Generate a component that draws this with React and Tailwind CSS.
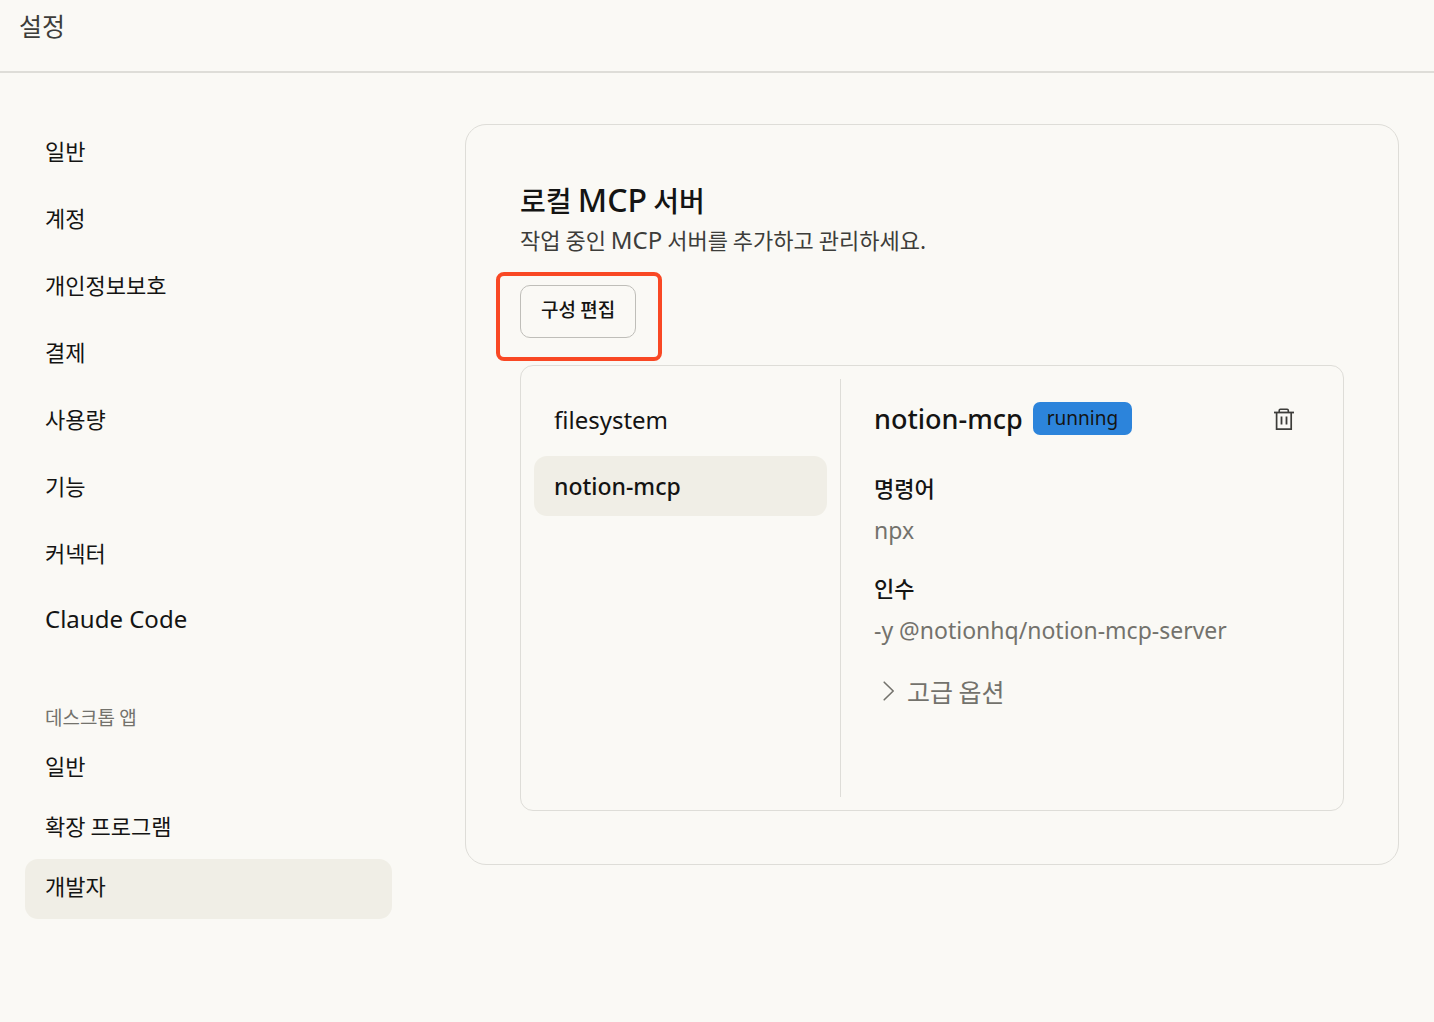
import { useState } from "react";

const mainMenu = ["일반", "계정", "개인정보보호", "결제", "사용량", "기능", "커넥터", "Claude Code"];
const desktopMenu = ["일반", "확장 프로그램", "개발자"];

const servers = [
  { name: "filesystem", command: "npx", args: "-y @modelcontextprotocol/server-filesystem" },
  { name: "notion-mcp", command: "npx", args: "-y @notionhq/notion-mcp-server" },
];

const latin = "font-['Noto_Sans','Noto_Sans_CJK_KR',sans-serif]";

const TrashIcon = () => (
  <svg width="22" height="24" viewBox="0 0 22 24" fill="none" stroke="#3d3d3a" aria-hidden="true">
    <path d="M1 5.5h20" strokeWidth="1.8" />
    <path d="M6.2 5V3.4c0-.8.5-1.2 1.2-1.2h6.7c.7 0 1.2.4 1.2 1.2V5" strokeWidth="1.6" />
    <path d="M3.6 6v16.1h14.6V6" strokeWidth="1.7" />
    <path d="M8.5 9.5v8M13.5 9.5v8" strokeWidth="1.8" />
  </svg>
);

const ChevronIcon = () => (
  <svg width="12" height="20" viewBox="0 0 12 20" fill="none" stroke="#73726c" aria-hidden="true">
    <path d="M1.2 1.2 10.2 10l-9 8.8" strokeWidth="1.6" strokeLinecap="round" strokeLinejoin="round" />
  </svg>
);

const NavItem = ({ label, active, onClick }) => {
  const isLatin = /^[\x20-\x7e]+$/.test(label);

  return (
    <li>
      <button
        type="button"
        onClick={onClick}
        className={`flex h-[60px] w-full items-center rounded-[13px] px-5 pb-2 text-left cursor-pointer ${
          active ? "bg-[#f0eee6]" : ""
        } ${isLatin ? `${latin} text-[24px]` : "text-[22px]"}`}
      >
        {label}
      </button>
    </li>
  );
};

const Sidebar = () => {
  const [active, setActive] = useState("desktop-개발자");

  return (
    <nav className="w-[367px] shrink-0">
      <ul className="flex flex-col gap-[7px]">
        {mainMenu.map((label) => (
          <NavItem
            key={label}
            label={label}
            active={active === `main-${label}`}
            onClick={() => setActive(`main-${label}`)}
          />
        ))}
      </ul>

      <h2 className="mt-12 px-5 pb-[6px] text-[19px] leading-8 text-[#73726c]">데스크톱 앱</h2>
      <ul className="flex flex-col">
        {desktopMenu.map((label) => (
          <NavItem
            key={label}
            label={label}
            active={active === `desktop-${label}`}
            onClick={() => setActive(`desktop-${label}`)}
          />
        ))}
      </ul>
    </nav>
  );
};

const ServerDetail = ({ server }) => (
  <section className="min-w-0 flex-1 pl-[33px] pr-[33px] pt-[13px]">
    <div className="flex items-center">
      <h3 className={`${latin} text-[27px] leading-[53px] font-medium`}>{server.name}</h3>
      <span className={`${latin} ml-[10px] rounded-[7px] bg-[#2c84db] px-[14px] text-[19px] leading-[33px]`}>
        running
      </span>
      <button
        type="button"
        aria-label="삭제"
        className="ml-auto flex size-[53px] items-center justify-center cursor-pointer"
      >
        <TrashIcon />
      </button>
    </div>

    <dl className="mt-[22px]">
      <dt className="text-[22px] leading-10 font-medium">명령어</dt>
      <dd className={`${latin} text-[23px] leading-[46px] text-[#73726c]`}>{server.command}</dd>
      <dt className="mt-[14px] text-[22px] leading-10 font-medium">인수</dt>
      <dd className={`${latin} text-[23px] leading-[46px] text-[#73726c]`}>{server.args}</dd>
    </dl>

    <button
      type="button"
      className="mt-[18px] flex items-center gap-3 pl-[9px] text-[25px] leading-10 text-[#73726c] cursor-pointer"
    >
      <ChevronIcon />
      고급 옵션
    </button>
  </section>
);

const App = () => {
  const [selected, setSelected] = useState("notion-mcp");
  const server = servers.find((s) => s.name === selected);

  return (
    <div className="min-h-screen bg-[#faf9f5] font-['Noto_Sans_CJK_KR','Noto_Sans',sans-serif] text-[#141413]">
      <header className="h-[73px] border-b-2 border-[#deddd8] px-[19px] pt-[5px]">
        <h1 className="text-[25px] leading-10 text-[#3d3d3a]">설정</h1>
      </header>

      <div className="flex items-start gap-[73px] pt-[51px] pl-[25px] pr-[35px]">
        <Sidebar />

        <main className="min-w-0 flex-1 rounded-[21px] border border-[#deddd8] px-[54px] py-[53px]">
          <h2 className="text-[28px] leading-[44px] font-medium">
            로컬 <span className={`${latin} text-[32px]`}>MCP</span> 서버
          </h2>
          <p className="text-[22px] leading-[34px] text-[#3d3d3a]">
            작업 중인 <span className={`${latin} text-[24px]`}>MCP</span> 서버를 추가하고 관리하세요.
          </p>

          <div className="relative mt-7 w-fit">
            <button
              type="button"
              className="h-[53px] rounded-[10px] border border-[#bfbeb9] px-5 pb-1 text-[19px] font-medium cursor-pointer"
            >
              구성 편집
            </button>
            {/* marco que resalta el botón */}
            <span className="pointer-events-none absolute -top-[13px] -right-[26px] -bottom-[23px] -left-[24px] rounded-[8px] border-4 border-[#f94824]" />
          </div>

          <div className="mt-[27px] flex min-h-[446px] rounded-[13px] border border-[#deddd8] py-[13px]">
            <ul className="flex w-[320px] shrink-0 flex-col gap-[6px] border-r border-[#deddd8] px-[13px] pt-[11px]">
              {servers.map((s) => (
                <li key={s.name}>
                  <button
                    type="button"
                    onClick={() => setSelected(s.name)}
                    className={`${latin} flex h-[60px] w-full items-center rounded-[13px] px-5 text-left cursor-pointer ${
                      s.name === selected ? "bg-[#f0eee6] font-medium text-[23px]" : "text-[24px]"
                    }`}
                  >
                    {s.name}
                  </button>
                </li>
              ))}
            </ul>
            <ServerDetail server={server} />
          </div>
        </main>
      </div>
    </div>
  );
};

export default App;
